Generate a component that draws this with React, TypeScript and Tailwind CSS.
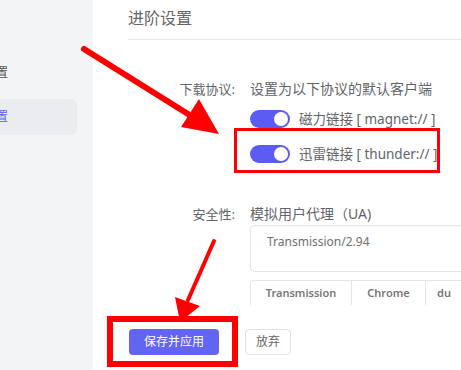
import React from "react";

function Toggle() {
  return (
    <div className="w-[40px] h-[18px] rounded-full bg-[#5b5cf2] relative shrink-0">
      <div className="absolute right-[2px] top-[2px] w-[14px] h-[14px] rounded-full bg-white" />
    </div>
  );
}

export default function App() {
  return (
    <div
      className="relative w-[461px] h-[370px] overflow-hidden flex bg-white text-[#626469]"
      style={{ fontFamily: '"Noto Sans", "Noto Sans CJK SC", sans-serif' }}
    >
      {/* Sidebar */}
      <div className="w-[93px] shrink-0 bg-[#f3f4f6] flex flex-col pt-[63px] overflow-hidden">
        <div className="h-[20px] flex items-center text-[12px] text-[#555] ml-[-40px] whitespace-nowrap">基本设置</div>
        <div className="mt-[16px] w-[77px] h-[36px] rounded-r-[6px] bg-[#eaecf0] flex items-center text-[12px] text-[#5b5cf2] overflow-hidden whitespace-nowrap">
          <span className="ml-[-40px]">进阶设置</span>
        </div>
      </div>

      {/* Main */}
      <div className="flex-1 pl-[35px] flex flex-col">
        <div className="h-[34px] flex items-center text-[16px] text-[#666] pt-[1px]">进阶设置</div>
        <div className="h-[6px] border-b border-[#e8e8ec]" />

        {/* Row: download protocol */}
        <div className="mt-[40px] flex">
          <div className="w-[122px] shrink-0 text-right pr-[15px] text-[13px] leading-[18px] whitespace-nowrap">下载协议:</div>
          <div className="flex flex-col">
            <div className="text-[14px] leading-[18px] whitespace-nowrap">设置为以下协议的默认客户端</div>
            <div className="mt-[12px] h-[18px] flex items-center gap-[9px]">
              <Toggle />
              <span className="text-[13.5px] whitespace-nowrap">磁力链接 [ magnet:// ]</span>
            </div>
            <div className="mt-[17px] h-[18px] flex items-center gap-[9px]">
              <Toggle />
              <span className="text-[13.5px] whitespace-nowrap">迅雷链接 [ thunder:// ]</span>
            </div>
          </div>
        </div>

        {/* Row: security */}
        <div className="mt-[42px] flex">
          <div className="w-[122px] shrink-0 text-right pr-[15px] text-[13px] leading-[18px] whitespace-nowrap">安全性:</div>
          <div className="flex flex-col flex-1">
            <div className="text-[14px] leading-[18px] whitespace-nowrap">模拟用户代理（UA)</div>
            <div className="mt-[2px] h-[47px] border border-[#e4e5ea] rounded-l-[5px] border-r-0 px-[16px] pt-[8px] text-[12px] leading-[16px] text-[#707070]">
              Transmission/2.94
            </div>
            <div className="mt-[8px] h-[25px] flex border border-b-0 border-r-0 border-[#e4e5ea] rounded-tl-[4px] text-[11px] font-semibold text-[#777]">
              <div className="w-[101px] shrink-0 flex items-center justify-center border-r border-[#e4e5ea]">Transmission</div>
              <div className="w-[74px] shrink-0 flex items-center justify-center border-r border-[#e4e5ea]">Chrome</div>
              <div className="w-[36px] shrink-0 flex items-center justify-center">du</div>
            </div>
          </div>
        </div>

        {/* Actions */}
        <div className="mt-[24px] flex items-center gap-[26px] ml-[1px]">
          <div className="w-[90px] h-[26px] rounded-[4px] bg-[#6464f2] text-white text-[12px] flex items-center justify-center">保存并应用</div>
          <div className="w-[46px] h-[26px] rounded-[4px] border border-[#e0e1e6] text-[12px] text-[#666] flex items-center justify-center">放弃</div>
        </div>
      </div>

      {/* Annotation boxes */}
      <div className="absolute left-[234px] top-[128px] w-[206px] h-[45px] border-[3px] border-[#ff0000]" />
      <div className="absolute left-[107px] top-[316px] w-[131px] h-[51px] border-[6px] border-[#ff0000]" />

      {/* Arrows */}
      <svg className="absolute left-0 top-0 pointer-events-none" width="461" height="370">
        <line x1="84" y1="49" x2="196" y2="119" stroke="#ff0000" strokeWidth="6" strokeLinecap="round" />
        <polygon points="219,134 181,127 199,99" fill="#ff0000" />
        <line x1="214" y1="241" x2="188" y2="300" stroke="#ff0000" strokeWidth="4" strokeLinecap="round" />
        <polygon points="180,322 175,297 200,306" fill="#ff0000" />
      </svg>
    </div>
  );
}
